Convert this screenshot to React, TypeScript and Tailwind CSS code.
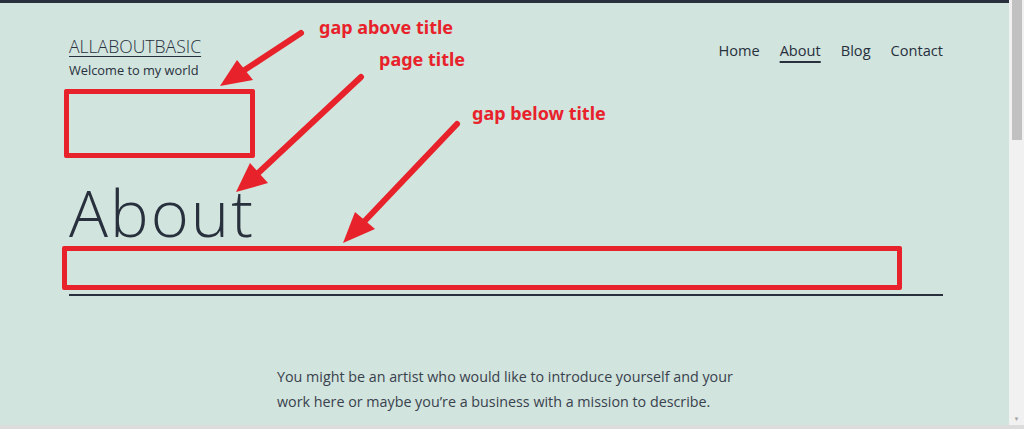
import React from 'react';

const navItems = ['Home', 'About', 'Blog', 'Contact'];

export default function App() {
    return (
        <div className="relative flex h-[429px] w-[1024px] overflow-hidden bg-[#d1e4dd] text-[#28303d]" style={{ fontFamily: '"Open Sans", "Noto Sans", sans-serif' }}>
            <main className="flex h-[425px] w-[1009px] flex-col border-t-[3px] border-[#28303d]">
                {/* header */}
                <header className="ml-[69px] flex w-[874px] items-start justify-between pt-[31px]">
                    <div className="flex flex-col">
                        <a className="text-[17.6px] leading-[24px] underline decoration-1 underline-offset-[3px] font-light">ALLABOUTBASIC</a>
                        <p className="mt-[2px] text-[12.8px] leading-[20px]">Welcome to my world</p>
                    </div>
                    <nav className="flex gap-[20px] pt-[4px] text-[14.6px] leading-[24px]">
                        {navItems.map((item) => (
                            <a key={item} className={item === 'About' ? 'underline decoration-2 underline-offset-[5px]' : ''}>{item}</a>
                        ))}
                    </nav>
                </header>

                {/* page title */}
                <div className="ml-[69px] mt-[99px] w-[874px]">
                    <h1 className="text-[65px] leading-[66px] font-light tracking-[2px]">About</h1>
                    <div className="mt-[49px] h-[2px] bg-[#28303d]"></div>
                </div>

                {/* content */}
                <div className="ml-[277px] mt-[68px] w-[470px] text-[14.3px] leading-[25px] text-[#39414d]">
                    <p>You might be an artist who would like to introduce yourself and your work here or maybe you’re a business with a mission to describe.</p>
                </div>
            </main>

            {/* scrollbar */}
            <div className="flex h-[425px] w-[15px] flex-col bg-[#f1f1f1]">
                <div className="ml-[3px] h-[140px] w-[10px] bg-[#c1c1c1]"></div>
                <div className="mt-auto mb-[2px] flex justify-center text-[6px] leading-[8px] text-[#a3a3a3]">▼</div>
            </div>
            <div className="absolute bottom-0 left-0 h-[4px] w-full bg-[#dcdcdc]"></div>

            {/* annotations */}
            <div className="absolute left-[64px] top-[89px] h-[69px] w-[191px] rounded-[2px] border-[5px] border-[#e8222b]"></div>
            <div className="absolute left-[62px] top-[246px] h-[44px] w-[840px] rounded-[2px] border-[5px] border-[#e8222b]"></div>

            <span className="absolute left-[319px] top-[16px] text-[18px] font-bold leading-[22px] text-[#e8222b]" style={{ fontFamily: '"Noto Sans", sans-serif' }}>gap above title</span>
            <span className="absolute left-[379px] top-[48px] text-[18px] font-bold leading-[22px] text-[#e8222b]" style={{ fontFamily: '"Noto Sans", sans-serif' }}>page title</span>
            <span className="absolute left-[472px] top-[102px] text-[18px] font-bold leading-[22px] text-[#e8222b]" style={{ fontFamily: '"Noto Sans", sans-serif' }}>gap below title</span>

            <svg className="pointer-events-none absolute left-0 top-0" width="1024" height="429" viewBox="0 0 1024 429">
                <g stroke="#e8222b" strokeWidth="6" strokeLinecap="round" fill="none">
                    <line x1="301" y1="33" x2="240" y2="73" />
                    <line x1="361" y1="77" x2="255" y2="176" />
                    <line x1="457" y1="124" x2="360" y2="226" />
                </g>
                <g fill="#e8222b">
                    <polygon points="220,86 237,60 253,80" />
                    <polygon points="236,192 250,163 268,183" />
                    <polygon points="343,243 355,212 375,229" />
                </g>
            </svg>
        </div>
    );
}
